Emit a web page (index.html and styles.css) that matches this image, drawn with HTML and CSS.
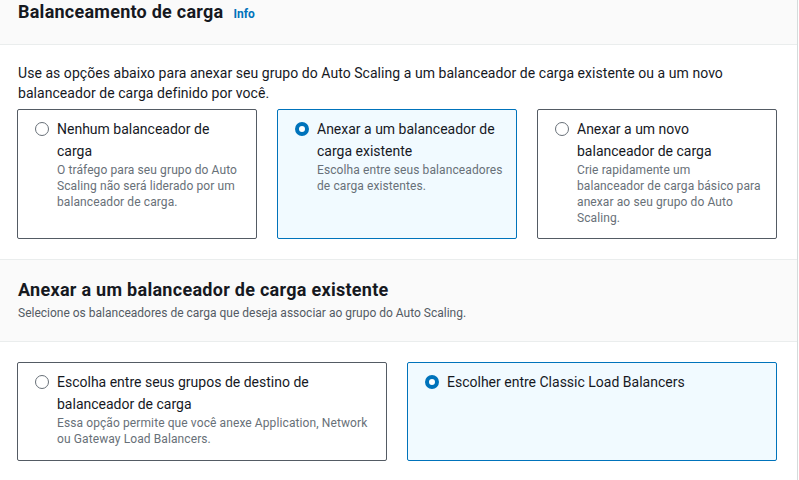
FILE: index.html
```html
<!DOCTYPE html>
<html lang="pt">
<head>
<meta charset="utf-8">
<link rel="stylesheet" href="styles.css">
</head>
<body>
<div class="page">
  <header class="panel-header">
    <h2 class="panel-title">Balanceamento de carga</h2>
    <a class="info-link" href="#">Info</a>
  </header>
  <section class="panel-body">
    <p class="intro">Use as opções abaixo para anexar seu grupo do Auto Scaling a um balanceador de carga existente ou a um novo balanceador de carga definido por você.</p>
    <div class="tiles tiles-3">
      <label class="tile">
        <span class="radio"></span>
        <span class="tile-text">
          <span class="tile-label">Nenhum balanceador de carga</span>
          <span class="tile-desc">O tráfego para seu grupo do Auto<br>Scaling não será liderado por um<br>balanceador de carga.</span>
        </span>
      </label>
      <label class="tile selected">
        <span class="radio"></span>
        <span class="tile-text">
          <span class="tile-label">Anexar a um balanceador de carga existente</span>
          <span class="tile-desc">Escolha entre seus balanceadores<br>de carga existentes.</span>
        </span>
      </label>
      <label class="tile">
        <span class="radio"></span>
        <span class="tile-text">
          <span class="tile-label">Anexar a um novo<br>balanceador de carga</span>
          <span class="tile-desc">Crie rapidamente um<br>balanceador de carga básico para<br>anexar ao seu grupo do Auto<br>Scaling.</span>
        </span>
      </label>
    </div>
  </section>
  <header class="sub-header">
    <h3 class="sub-title">Anexar a um balanceador de carga existente</h3>
    <p class="sub-desc">Selecione os balanceadores de carga que deseja associar ao grupo do Auto Scaling.</p>
  </header>
  <section class="panel-body lower">
    <div class="tiles tiles-2">
      <label class="tile">
        <span class="radio"></span>
        <span class="tile-text">
          <span class="tile-label">Escolha entre seus grupos de destino de balanceador de carga</span>
          <span class="tile-desc">Essa opção permite que você anexe Application, Network<br>ou Gateway Load Balancers.</span>
        </span>
      </label>
      <label class="tile selected">
        <span class="radio"></span>
        <span class="tile-text">
          <span class="tile-label">Escolher entre Classic Load Balancers</span>
        </span>
      </label>
    </div>
  </section>
</div>
</body>
</html>
```

FILE: styles.css
```css
* { box-sizing: border-box; }
html, body { margin: 0; padding: 0; background: #fff; }
body {
  font-family: Roboto, "Liberation Sans", Arial, sans-serif;
  color: #16191f;
  font-size: 14px;
  line-height: 20px;
}
.page {
  width: 798px;
  min-height: 480px;
  border-right: 1px solid #d5dbdb;
}
.panel-header {
  height: 45px;
  background: #fafafa;
  border-bottom: 1px solid #eaeded;
  padding: 1px 18px 0;
  display: flex;
  align-items: baseline;
  gap: 10px;
}
.panel-title {
  margin: 0;
  font-size: 18px;
  line-height: 22px;
  font-weight: 700;
  letter-spacing: 0.25px;
}
.info-link {
  font-size: 12px;
  font-weight: 700;
  color: #0073bb;
  text-decoration: none;
}
.panel-body {
  padding: 18px 20px 20px 17px;
}
.intro {
  margin: 0 0 6px 1px;
  letter-spacing: 0.05px;
}
.tiles {
  display: grid;
  gap: 20px;
}
.tiles-3 { grid-template-columns: repeat(3, 240px); }
.tiles-2 { grid-template-columns: repeat(2, 370px); }
.tile {
  display: flex;
  align-items: flex-start;
  gap: 8px;
  border: 1px solid #545b64;
  border-radius: 2px;
  padding: 8px 14px 12px 17px;
  background: #fff;
}
.tile.selected {
  border-color: #0073bb;
  background: #f1faff;
}
.radio {
  flex: none;
  width: 14px;
  height: 14px;
  margin-top: 4px;
  border: 1.5px solid #687078;
  border-radius: 50%;
  background: #fff;
}
.tile.selected .radio {
  border: 4.5px solid #0073bb;
  background: #fff;
}
.tile-text {
  display: flex;
  flex-direction: column;
}
.tile-label {
  font-size: 14px;
  line-height: 22px;
}
.tile-desc {
  font-size: 12px;
  line-height: 16px;
  color: #687078;
  letter-spacing: 0.1px;
  white-space: nowrap;
}
.sub-header {
  background: #fafafa;
  border-top: 1px solid #eaeded;
  border-bottom: 1px solid #eaeded;
  padding: 19px 18px 20px;
}
.sub-title {
  margin: 0;
  font-size: 18px;
  line-height: 22px;
  font-weight: 700;
  letter-spacing: 0.28px;
}
.sub-desc {
  margin: 4px 0 0;
  font-size: 12px;
  line-height: 16px;
  color: #545b64;
}
.panel-body.lower {
  padding-top: 20px;
}
.tiles-2 .tile { min-height: 99px; }
```
